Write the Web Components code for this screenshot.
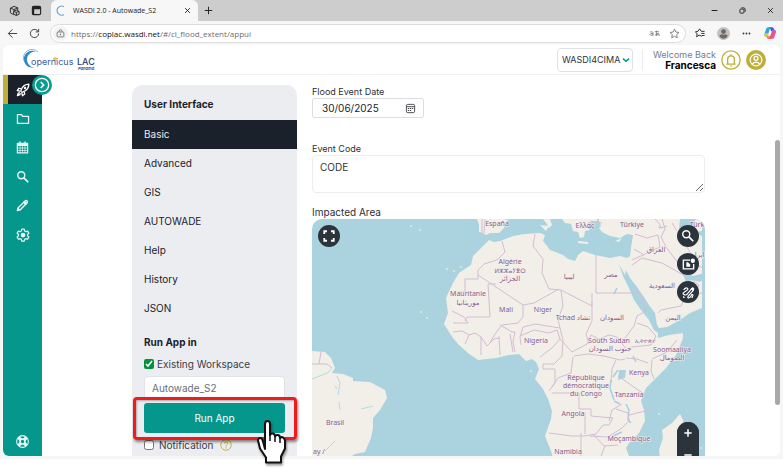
<!DOCTYPE html>
<html lang="en">
<head>
<meta charset="utf-8">
<title>WASDI 2.0 - Autowade_S2</title>
<style>
  html, body { height: 100%; }
  body { margin: 0; background: #fff; font-family: Inter, "Liberation Sans", sans-serif; color: #1b212b; overflow: hidden; }
</style>
</head>
<body>
<browser-window>
  <tab-strip slot="tabs"></tab-strip>
  <address-bar slot="toolbar"></address-bar>
  <app-header slot="page"></app-header>
  <app-body slot="page"></app-body>
</browser-window>
<click-hint></click-hint>

<script>
const ICONS = {
  spaces: ['0 0 24 24', '<g fill="none" stroke="currentColor" stroke-width="2" stroke-linejoin="round"><path d="M3 7l8-4 8 3v5M3 7v10l7 4M3 7l8 3 8-4M11 10v3"/><path d="M10 14l6-3 6 3v6l-6 3-6-3zM10 14l6 2 6-2M16 16v7"/></g>'],
  tabs: ['0 0 24 24', '<rect x="3" y="3" width="18" height="18" rx="3" fill="none" stroke="currentColor" stroke-width="2.4"/><path d="M3 3h18v6H3zM3 8h4v13H3z" fill="currentColor"/>'],
  x: ['0 0 24 24', '<path d="M4 4l16 16M20 4L4 20" fill="none" stroke="currentColor" stroke-width="3.200"/>'],
  plus: ['0 0 24 24', '<path d="M12 2v20M2 12h20" fill="none" stroke="currentColor" stroke-width="2.6"/>'],
  zoomin: ['0 0 24 24', '<path d="M12 1v22M1 12h22" fill="none" stroke="currentColor" stroke-width="4.600"/>'],
  zoomout: ['0 0 24 24', '<path d="M1 12h22" fill="none" stroke="currentColor" stroke-width="4.600"/>'],
  min: ['0 0 24 24', '<path d="M2 12h20" fill="none" stroke="currentColor" stroke-width="3.600"/>'],
  restore: ['0 0 24 24', '<g fill="none" stroke="currentColor" stroke-width="3.200"><rect x="3" y="7" width="14" height="14" rx="3"/><path d="M8 3h8a5 5 0 0 1 5 5v8"/></g>'],
  back: ['0 0 24 24', '<path d="M22 12H3M12 3l-9 9 9 9" fill="none" stroke="currentColor" stroke-width="2"/>'],
  reload: ['0 0 24 24', '<path d="M21 12a9 9 0 1 1-3-6.700L21 8M21 2v6.500h-6.500" fill="none" stroke="currentColor" stroke-width="2"/>'],
  lock: ['0 0 24 24', '<g fill="none" stroke="currentColor" stroke-width="2.2"><rect x="3" y="8" width="18" height="13" rx="2"/><path d="M8 8V6a4 4 0 0 1 8 0v2"/></g><circle cx="12" cy="14.500" r="2" fill="currentColor"/>'],
  star: ['0 0 24 24', '<path d="M12 2.500l3 6.300 6.800.9-5 4.700 1.300 6.900L12 18l-6.100 3.300 1.300-6.900-5-4.700 6.800-.9z" fill="none" stroke="currentColor" stroke-width="1.800" stroke-linejoin="round"/>'],
  favs: ['0 0 24 24', '<path d="M16 20l-6-3-6 4 1-7-4-5 6-1 4-6 4 6h8M15 13h8M16 18h7" fill="none" stroke="currentColor" stroke-width="2.400" stroke-linejoin="round"/>'],
  person: ['0 0 24 24', '<circle cx="12" cy="12" r="12" fill="#c4c0bd"/><circle cx="12" cy="8.500" r="4.500" fill="#6d6966"/><path d="M4.500 17q0-3 3-3h9q3 0 3 3-2.500 4.500-7.500 4.500T4.500 17z" fill="#6d6966"/>'],
  dots: ['0 0 24 24', '<g fill="currentColor"><circle cx="4" cy="12" r="2.400"/><circle cx="12" cy="12" r="2.400"/><circle cx="20" cy="12" r="2.400"/></g>'],
  copilot: ['0 0 24 24', '<path d="M9 2h7q2 0 3 4l1 3h-6l-1-3q-1-3-4-4z" fill="#2167d8"/><path d="M9 2Q6 2 5 6L3 12q-2 6 2 6h3l3-11q1-4 4-5z" fill="#29a8e6"/><path d="M4 12q-3 6 1 6h4l2-5z" fill="#f2c230"/><path d="M15 22q3 0 4-4l2-6q2-6-2-6h-3l-3 11q-1 4-4 5z" fill="#b35cf0"/><path d="M20 9q3-2 2 2l-2 6q-1 5-5 5H9q-2 0-3-4h5q1 0 2-2l1-4z" fill="#ee5480"/><path d="M6 18h6l-2 4H9q-2 0-3-4z" fill="#f58a3a"/><path d="M11 9h3l-2 6H9z" fill="#fff"/>'],
  chevron: ['0 0 24 24', '<path d="M3 8l9 8 9-8" fill="none" stroke="currentColor" stroke-width="4.500"/>'],
  bell: ['0 0 24 24', '<circle cx="12" cy="12" r="11" fill="none" stroke="currentColor" stroke-width="1.600"/><path d="M6.500 17h11M8 17v-6q0-4 4-4t4 4v6M12 7V5M11 19.300h2" fill="none" stroke="currentColor" stroke-width="1.600"/>'],
  account: ['0 0 24 24', '<circle cx="12" cy="12" r="12" fill="currentColor"/><g fill="none" stroke="#fff" stroke-width="1.500"><circle cx="12" cy="12" r="7"/><circle cx="12" cy="10" r="2.400"/><path d="M7.500 17q1.500-2.500 4.500-2.500t4.500 2.500"/></g>'],
  rocket: ['0 0 24 24', '<g fill="none" stroke="currentColor" stroke-width="2.200" stroke-linejoin="round"><path d="M8 14q2-7 6-9.500T22 2q0 4-2.500 8T10 16z"/><path d="M9 10L5 9l-3 4 5 1M14 15l1 4-4 3-1-5"/><path d="M6.500 16.500q-3-.5-4 5 5-1 5-4"/></g><circle cx="15.500" cy="8.500" r="2" fill="currentColor"/>'],
  folder: ['0 0 24 24', '<path d="M2.500 4.500h7l2 3h10v12h-19z" fill="none" stroke="currentColor" stroke-width="2.200" stroke-linejoin="round"/>'],
  calendar: ['0 0 24 24', '<path d="M2.500 4.500h19V22h-19z" fill="none" stroke="currentColor" stroke-width="2.200" stroke-linejoin="round"/><path d="M2 4h20v5H2zM6 1h2.500v4H6zM15.500 1H18v4h-2.500z" fill="currentColor"/><path d="M3 13h18M3 17.500h18M7.500 9v13M12 9v13M16.500 9v13" stroke="currentColor" stroke-width="1.300"/>'],
  search: ['0 0 24 24', '<circle cx="9" cy="9" r="6" fill="none" stroke="currentColor" stroke-width="2.500"/><path d="M13.500 13.500L21 21" stroke="currentColor" stroke-width="3"/>'],
  pencil: ['0 0 24 24', '<path d="M2.500 21.500L4 16 17 3.500q2-1.500 3.500 0t0 3.500L8 20z" fill="none" stroke="currentColor" stroke-width="2.600" stroke-linejoin="round"/><path d="M2 22l2-6 4 4zM12 6l6 6 3-4-5-5z" fill="currentColor"/>'],
  gear: ['0 0 24 24', '<path d="M9.800 2h4.400l.6 3.100 2.100 1.200 3-1 2.200 3.800-2.400 2v2.400l2.400 2-2.200 3.800-3-1-2.100 1.200-.6 3H9.800l-.6-3-2.100-1.200-3 1-2.200-3.800 2.400-2v-2.400l-2.400-2L4.100 5.300l3 1 2.100-1.200z" fill="none" stroke="currentColor" stroke-width="2.100" stroke-linejoin="round"/><circle cx="12" cy="12.200" r="4" fill="currentColor"/>'],
  support: ['0 0 24 24', '<circle cx="12" cy="12" r="10.800" fill="none" stroke="currentColor" stroke-width="2"/><circle cx="12" cy="12" r="4.500" fill="none" stroke="currentColor" stroke-width="3"/><path d="M4.500 4.500l4.500 4.500M19.500 4.500L15 9M4.500 19.500L9 15M19.500 19.500L15 15" stroke="currentColor" stroke-width="6"/><circle cx="12" cy="12" r="2.600" fill="#05978c"/>'],
  toggle: ['0 0 24 24', '<circle cx="12" cy="12" r="12" fill="#0a9b90"/><circle cx="12" cy="12" r="8" fill="none" stroke="#fff" stroke-width="1.600"/><path d="M10.500 8.500L14 12l-3.500 3.500" fill="none" stroke="#fff" stroke-width="1.800"/>'],
  date: ['0 0 24 24', '<rect x="3" y="3" width="18" height="18" rx="3" fill="none" stroke="currentColor" stroke-width="2"/><path d="M3 8h18" stroke="currentColor" stroke-width="2"/><g fill="currentColor"><path d="M6 11h3v2H6zM10.500 11h3v2h-3zM15 11h3v2h-3zM6 15.500h3v2H6zM10.500 15.500h3v2h-3z"/></g>'],
  help: ['0 0 24 24', '<circle cx="12" cy="12" r="10.500" fill="none" stroke="currentColor" stroke-width="1.800"/><path d="M8.500 9.500q0-3.500 3.500-3.500t3.500 3.200q0 1.800-2 2.900-1.500.9-1.500 2.700" fill="none" stroke="currentColor" stroke-width="2"/><circle cx="12" cy="17.700" r="1.400" fill="currentColor"/>'],
  full: ['0 0 24 24', '<path d="M2.500 8V2.500H8M16 2.500h5.500V8M21.500 16v5.500H16M8 21.500H2.500V16" fill="none" stroke="currentColor" stroke-width="3.600"/>'],
  area: ['0 0 24 24', '<path d="M15 4H2.500v16h19V11" fill="none" stroke="currentColor" stroke-width="2.600"/><path d="M8 8h3l4 4v4h-7z" fill="currentColor"/><circle cx="20" cy="5" r="4" fill="currentColor"/>'],
  draw: ['0 0 24 24', '<path d="M3 7q4-5 7-3t-4 6-2 6 7-3l7-8 3 3-8 9q-4 5-1 5t6-6q3-1 2 2l-2 4" fill="none" stroke="currentColor" stroke-width="2.200" stroke-linejoin="round"/><path d="M16 5l4-3 3 3-3 4zM2 18l4 3-4 1z" fill="currentColor"/>'],
  loading: ['0 0 24 24', '<path d="M17 3.500A10 10 0 1 0 17 21" fill="none" stroke="#6fa8d8" stroke-width="2.600"/>'],
  translate: ['0 0 30 24', '<g fill="none" stroke="currentColor" stroke-width="2"><path d="M3 8q7-3 8 2v8M11 12q-8-1-8 3t8 1M16 7h11M20 4v12M26 10q-2 8-7 8-3-1 0-4t7-1 1 6"/></g>']
};

const define = (name, css, html, setup) => {
  const template = document.createElement('template');
  template.innerHTML = `<style>:host,*,*::before,*::after{box-sizing:border-box}button{border:0;padding:0;background:none;color:inherit;font:inherit;display:grid;place-items:center}${css}</style>${html}`;
  customElements.define(name, class extends HTMLElement {
    constructor() {
      super();
      this.attachShadow({ mode: 'open' }).append(template.content.cloneNode(true));
    }
    connectedCallback() { if (setup) setup(this, this.shadowRoot); }
  });
};

define('ui-icon', ':host{display:block;width:var(--size,12px);height:var(--size,12px);flex:none}svg{display:block;width:100%;height:100%}',
  '<svg aria-hidden="true"></svg>', (el, root) => {
    const [box, shapes] = ICONS[el.getAttribute('name')];
    const svg = root.querySelector('svg');
    svg.setAttribute('viewBox', box);
    svg.innerHTML = shapes;
  });

define('browser-window', `
  :host{display:flex;flex-direction:column;height:100vh;background:#fff}
  .frame{flex:1;min-height:0;display:flex;flex-direction:column;margin-bottom:13px;padding:0 3px 3px;background:#f6f6f6}
  .chrome{margin:0 -3px}
  .page{flex:1;min-height:0;display:flex;flex-direction:column;overflow:hidden;background:#fff;border-radius:6px}`,
  '<div class="frame"><div class="chrome"><slot name="tabs"></slot><slot name="toolbar"></slot></div><main class="page"><slot name="page"></slot></main></div>');

define('tab-strip', `
  :host{display:flex;align-items:stretch;height:21px;background:#cdcdcd;font:7px "Open Sans",sans-serif;color:#222}
  .tools{display:flex;align-items:center;gap:11px;width:51px;padding-left:9px}
  .tab{display:flex;align-items:center;gap:6px;width:147px;padding:0 7px 0 5px;background:#f7f7f7;border-radius:6px 6px 0 0}
  .tab span{flex:1;white-space:nowrap}
  .new{margin-left:6px}
  .win{display:flex;align-items:center;gap:21px;margin-left:auto;padding-right:9px}`,
  `<div class="tools"><button aria-label="Workspaces"><ui-icon name="spaces" style="--size:11px"></ui-icon></button><button aria-label="Tab actions"><ui-icon name="tabs" style="--size:11px"></ui-icon></button></div>
   <div class="tab"><ui-icon name="loading" style="--size:11px"></ui-icon><span>WASDI 2.0 - Autowade_S2</span><button aria-label="Close tab"><ui-icon name="x" style="--size:7px"></ui-icon></button></div>
   <button class="new" aria-label="New tab"><ui-icon name="plus" style="--size:9px"></ui-icon></button>
   <div class="win"><button aria-label="Minimize"><ui-icon name="min" style="--size:7px"></ui-icon></button><button aria-label="Restore"><ui-icon name="restore" style="--size:7px"></ui-icon></button><button aria-label="Close"><ui-icon name="x" style="--size:7px"></ui-icon></button></div>`);

define('address-bar', `
  :host{display:flex;align-items:center;gap:11px;height:24px;padding:0 6px 0 7px;background:#f7f7f7;color:#333;font:8px "Open Sans",sans-serif}
  .box{flex:1;display:flex;align-items:center;gap:9px;height:19px;margin-left:-1px;padding:0 5px 0 2px;background:#fff;border:1px solid #dcdcdc;border-radius:10px;color:#6a6a6a}
  .site{width:15px;height:15px;border-radius:50%;background:#f3f3f3}
  a{flex:1;margin-left:-6px;color:#6c6c6c;text-decoration:none;white-space:nowrap}
  b{font-weight:400;color:#111}
  .right{display:flex;align-items:center;gap:12px;margin-left:-2px}`,
  `<button aria-label="Back"><ui-icon name="back" style="--size:11px"></ui-icon></button>
   <button aria-label="Reload"><ui-icon name="reload" style="--size:11px"></ui-icon></button>
   <div class="box"><button class="site" aria-label="Site information"><ui-icon name="lock" style="--size:9px"></ui-icon></button><a href="#/cl_flood_extent/appui">https://<b>coplac.wasdi.net</b>/#/cl_flood_extent/appui</a><button aria-label="Translate"><ui-icon name="translate" style="--size:11px"></ui-icon></button><button aria-label="Favorite"><ui-icon name="star" style="--size:11px"></ui-icon></button></div>
   <div class="right"><button aria-label="Favorites"><ui-icon name="favs" style="--size:10px"></ui-icon></button><button aria-label="Profile"><ui-icon name="person" style="--size:13px"></ui-icon></button><button aria-label="Settings"><ui-icon name="dots" style="--size:9px"></ui-icon></button><button aria-label="Copilot"><ui-icon name="copilot" style="--size:14px"></ui-icon></button></div>`);

define('brand-logo', `
  :host{display:block}
  svg{display:block;width:74px;height:22px}
  text{font-family:Inter,sans-serif}`,
  `<svg viewBox="0 0 74 22" role="img" aria-label="Copernicus LAC Panamá"><path d="M13 2.500A8.500 8.500 0 1 0 11 18.500 8 8 0 0 1 13 2.500z" fill="#2f86c4"/><path d="M15 3A8.500 8.500 0 0 0 1 12" fill="none" stroke="#7db9e0"/>
   <circle cx="32" cy="10" r="2" fill="#f0cc30"/><text x="8" y="16" font-size="9" fill="#3d5ca0">opernicus</text><text x="54" y="16" font-size="9" font-weight="500" fill="#263c72">LAC</text>
   <text x="55" y="21" font-size="4" font-weight="700" font-style="italic" fill="#2d55a5">Panamá</text></svg>`);

define('app-header', `
  :host{display:flex;align-items:center;flex:none;height:30px;padding:0 14px 0 20px;border-bottom:1px solid #f0f0f0}
  .pick{position:relative;margin-left:auto;color:#05978c}
  select{appearance:none;display:block;height:24px;width:76px;padding:0 4px;border:1px solid #dfe0e8;border-radius:4px;background:#fff;font:9px Inter,sans-serif;color:#2c3340}
  .pick ui-icon{position:absolute;right:3px;top:8px;pointer-events:none}
  .user{margin-left:9px;padding-left:10px;border-left:1px solid #ececec;text-align:right;font-size:9px;line-height:11px;color:#757d90}
  .user b{display:block;font-size:10px;color:#000}
  .icons{display:flex;gap:5px;margin-left:5px;color:#bfae38}`,
  `<brand-logo></brand-logo>
   <div class="pick"><select aria-label="Organization"><option>WASDI4CIMA</option></select><ui-icon name="chevron" style="--size:8px"></ui-icon></div>
   <div class="user">Welcome Back<b>Francesca</b></div>
   <div class="icons"><button aria-label="Notifications"><ui-icon name="bell" style="--size:20px"></ui-icon></button><button aria-label="Account"><ui-icon name="account" style="--size:20px"></ui-icon></button></div>`);

define('app-body', `
  :host{flex:1;min-height:0;display:flex}
  .work{flex:1;min-width:0;display:grid;grid-template-columns:165px minmax(0,1fr);gap:15px;padding:10px 70px 0 90px}
  .bar{width:5px;padding-top:65px}
  .bar div{height:265px;border-radius:3px;background:#a9a9a9}`,
  `<side-nav></side-nav><div class="work"><app-menu></app-menu><event-form></event-form></div><div class="bar"><div></div></div>`);

define('side-nav', `
  :host{position:relative;display:flex;flex-direction:column;width:39px;background:#05978c;color:#e8f7f5}
  nav{display:flex;flex-direction:column;flex:1}
  a{display:grid;place-items:center;height:29px;color:inherit}
  a.on{background:#1b212b;color:#fff;border-left:5px solid #bfae38;padding-right:5px}
  a.last{margin-top:auto}
  .open{position:absolute;right:-10px;top:0}`,
  `<nav aria-label="Main">
    <a class="on" href="#apps" aria-label="Apps"><ui-icon name="rocket" style="--size:14px"></ui-icon></a>
    <a href="#workspaces" aria-label="Workspaces"><ui-icon name="folder" style="--size:14px"></ui-icon></a>
    <a href="#plan" aria-label="Plan"><ui-icon name="calendar" style="--size:13px"></ui-icon></a>
    <a href="#search" aria-label="Search"><ui-icon name="search" style="--size:14px"></ui-icon></a>
    <a href="#edit" aria-label="Edit"><ui-icon name="pencil" style="--size:13px"></ui-icon></a>
    <a href="#settings" aria-label="Settings"><ui-icon name="gear" style="--size:14px"></ui-icon></a>
    <a class="last" href="#support" aria-label="Support"><ui-icon name="support" style="--size:13px"></ui-icon></a>
   </nav><button class="open" aria-label="Expand menu"><ui-icon name="toggle" style="--size:20px"></ui-icon></button>`);

define('app-menu', `
  :host{display:block;background:#ecedf0;border-radius:10px 10px 0 0;font-size:10px;color:#1b212b}
  h2{margin:0;font-size:10px;font-weight:700}
  h2.top{height:35px;padding:4px 12px 0;line-height:31px}
  a{display:block;height:29px;padding:0 12px;line-height:29px;color:inherit;text-decoration:none}
  a.on{background:#1b212b;color:#e9eaec}
  form{display:flex;flex-direction:column;padding:12px 12px 0}
  h2.run{line-height:14px;margin-bottom:8px}
  label{display:flex;align-items:center;gap:2px;height:14px;color:#3a404a}
  label span{padding-left:1px}
  input[type=checkbox]{width:10px;height:10px;margin:0;accent-color:#07903c}
  input[type=text]{width:100%;height:24px;margin-top:5px;padding:0 7px;border:1px solid #e2e3e6;border-radius:4px;background:#fff;font:10px Inter,sans-serif;color:#6a6f78}
  .go{height:30px;margin:3px 0 5px;border-radius:3px;background:#05978c;color:#fff}
  label.note{gap:4px}
  label ui-icon{margin-left:3px;color:#bfae38}`,
  `<h2 class="top">User Interface</h2>
   <nav aria-label="Sections"><a class="on" href="#basic">Basic</a><a href="#advanced">Advanced</a><a href="#gis">GIS</a><a href="#autowade">AUTOWADE</a><a href="#help">Help</a><a href="#history">History</a><a href="#json">JSON</a></nav>
   <form><h2 class="run">Run App in</h2>
   <label><input type="checkbox" checked><span>Existing Workspace</span></label>
   <input type="text" aria-label="Workspace" value="Autowade_S2">
   <button class="go" type="button">Run App</button>
   <label class="note"><input type="checkbox"><span>Notification</span><ui-icon name="help" style="--size:12px"></ui-icon></label></form>`);

define('event-form', `
  :host{display:flex;flex-direction:column;min-width:0;color:#2c3038}
  label{font-size:9px;line-height:13px}
  .date{position:relative;align-self:flex-start;margin-bottom:24px}
  input{display:block;width:112px;height:20px;padding:0 9px;border:1px solid #dcdde4;border-radius:3px;font:10px Inter,sans-serif;color:#20242c}
  .date button{position:absolute;right:8px;top:5px;color:#444}
  textarea{display:block;width:100%;height:38px;margin-bottom:12px;padding:5px 7px;border:1px solid #ececf0;border-radius:4px;font:10px/13px Inter,sans-serif;color:#333;resize:vertical}
  .area{font-size:10px;line-height:14px}
  area-map{flex:1;min-height:237px}`,
  `<label for="d">Flood Event Date</label><div class="date"><input id="d" type="text" value="30/06/2025"><button type="button" aria-label="Choose date"><ui-icon name="date" style="--size:11px"></ui-icon></button></div>
   <label for="c">Event Code</label><textarea id="c">CODE</textarea>
   <div class="area">Impacted Area</div><area-map></area-map>`);

define('area-map', `
  :host{display:block;position:relative;overflow:hidden;border-radius:10px 10px 0 0;background:#aad3df}
  svg{position:absolute;inset:0;width:100%;height:100%}
  text{font-family:"Noto Sans","DejaVu Sans",sans-serif;font-size:7px;fill:#85598d;text-anchor:middle;paint-order:stroke;stroke:#f6f3ef;stroke-width:1px}
  .small{font-size:6px}
  button{width:22px;height:22px;border-radius:50%;background:#2b343b;color:#fff}
  .full{position:absolute;left:6px;top:6px}
  .tools{position:absolute;right:6px;top:6px;display:grid;gap:6px}
  .zoom{position:absolute;right:6px;top:203px;border-radius:11px;background:#2b343b}`,
  `<svg viewBox="0 0 393 237" preserveAspectRatio="xMinYMin slice" role="img" aria-label="Map of Africa and the Atlantic">
   <g fill="#f2efe9">
    <path d="M177 21l5 2 6-1 13-5 12-2 15-1 5 2-2 6 4 5 3 4 13 5 5 4 7 2 3-6 5-4 12 4 15 3 10-2 7 2 3-2 1-8 2-13-6-1-7 4-5-1-5-1-8-4-3-4 2-2-2-5V0h103v89l-12 5-10 7-13 7-8 1-2-3-2-12-6-8-5-8-7-10-7-9-4-8-1 5-6-11 4 12 6 12 5 12 7 10 8 10 5 10 4 3v5l11-3 14-2v5l-1 3-6 14-10 13-12 12-8 8-3 7-2 6 3 9 1 11-6 12-10 10-3 5 3 8v5h-75l-3-10-6-15 6-17 1-8-4-12-5-10-8-10 4-10-3-7-4-3-6 2-7-7-10 1-13 3-18 2-10-7-9-8-6-7-2-3-7-11 4-11-2-15 7-15 6-10 12-8 2-9 10-10z"/>
    <path d="M165 0l2 6v7l4 1 3 2 4-2h9l5-5 1-5 4-4z"/>
    <path d="M231 0l4 5 2 4 3-3-2-6zM250 0l3 4 6 1 2 7 5 1 2 6 4-1 1-6 5-1-4-4 2-3 9-2V0z"/><path d="M266 22l10 1v2l-10-1zM303 22l7-3-3 4zM228 6l9 1-3 5z"/>
    <path d="M0 132l13 1 6 6 4 10-3 5 11 1 10 4v3l17 1 15 8 2 8-7 12-7 8v10l-2 10-6 14-10 2-5 3H0z"/>
    <path d="M368 195l3 6 1 7-3 10-4 20h-17l-1-7 4-12-1-8 10-7z"/>
   </g>
   <g fill="#aad3df">
    <path d="M368 0h16l-4 6 5 8-3 8-9 0-6-12zM383 14l9-3v7zM365 45l7 13 2 5 6-2 8 2 5-4v-5l-12 3-6-4-6-10zM307 151l7 0-1 8-7 2zM346 8l3-1-1 3z"/>
   </g>
   <path d="M299 161l-1 8 4 12M302 182l6 3M314 185l3 6-1 10 3 3M310 213l-9 4M321 137l3 6M306 151l-5 7M305 69l-3 6" fill="none" stroke="#a6cfe4" stroke-width="1.500"/>
   <path d="M25 157l3 7-2 12M0 160l15-6 5-4M23 167l2 3M61 187l-12 3M13 232l10-10M27 183l1 8" fill="none" stroke="#b5d9e4"/>
   <g fill="none" stroke="#d3bdd2" stroke-width="1">
    <path d="M190 22l3 11-8 8-13 4-6 6v9h-13v13h-6M166 56l45 30 11-2 25-14M176 65l2 33h-23l-2 4M176 65l8 0M211 86v12l-5 6-16 2-7 9-5 9M223 15l-2 12 10 13-1 14 7 16M237 70l12 1 31 16V74M284 36v38h43M280 83v19l-6 13 3 10M249 71l2 16-5 13 2 9M248 109l-25-4-12 3-3 10 1 8M140 92l12 6 4 6h-15M141 113l9-1 7 4-4 9M157 116l6-2 6 4 6 9 7-7 5-1M169 118v18M187 117l1 19M198 115l3 18M203 113l-2 10 2 10M188 106l12 7 3 0M208 117l14-6 15 3 8-3 3 9-8 9-12 9"/>
    <path d="M248 120l12 13 15-8 4-9 8 4 10-4 8 2 9 12M248 109l3 12-1 16-8 8-11 0v5h12v14l-6 8M261 138l-2 16-13 5-6 9M262 137l14-2 16 2 16 4 5-1M304 141l-4 9-1 14M314 139l11 1 11 4M340 141l-1 11 3 8M306 157l26 18M240 174h27v16h12v7l22 2-4 7h-6l-7 9-12 2h-12l-23-3M269 214v24M273 193v22M281 215l11 12 14-1M297 202l3-11 10-6M317 196l20-5M293 227l-4 10M278 217l18 1 14-9 8-8M304 190l12 4 1 7M327 74l7 18-9 5-3 10-9 12M325 104l11 4 8 9-5 9-20 2M340 140l15-7 10-12"/>
    <path d="M320 46l10-7 20 5 25 14M323 15l12 4 11-3 2 12-17 8-11 5M322 30l10 6M350 0l3 10-4 8 5 10 15 20 4 4M346 94l3-3 20-4 4-8 20-6M360 4l5 8M375 28l10 18 8 4M379 60l8 6-6 13M173 0l-1 14M170 16V0M290 4l-12-2M0 145h15l5 4M9 133l-2 12M193 0l8 0M343 0q6 5 6 9l6-2"/>
   </g>
   <g fill="#dcebe0"><circle cx="135" cy="50" r="1"/><circle cx="142" cy="52" r="1"/><circle cx="149" cy="48" r="1"/><circle cx="109" cy="93" r="1"/><circle cx="115" cy="99" r="1"/><circle cx="99" cy="7" r="1"/><circle cx="108" cy="11" r="1"/><circle cx="219" cy="152" r="1"/><circle cx="347" cy="195" r="1"/><circle cx="389" cy="229" r="1"/></g>
   <g><text x="185" y="7">España</text><text x="273" y="9">Ελλάς</text><text x="320" y="8">Türkiye</text><text x="385" y="8">Türk</text>
    <text x="198" y="45">Algérie</text><text x="198" y="54" class="small">ⵍⵣⵣⴰⵢⴻⵔ</text><text x="198" y="62">الجزائر</text>
    <text x="257" y="60">ليبيا</text><text x="299" y="58">مصر</text><text x="344" y="33">العراق</text><text x="385" y="38">ایران</text><text x="350" y="69">السعودية</text><text x="361" y="101">اليمن</text>
    <text x="156" y="77">Mauritanie</text><text x="156" y="86">موريتانيا</text><text x="194" y="93">Mali</text><text x="231" y="93">Niger</text><text x="261" y="101">Tchad تشاد</text><text x="300" y="101">السودان</text>
    <text x="224" y="124">Nigeria</text><text x="297" y="124">South Sudan</text><text x="298" y="132">جنوب السودان</text><text x="333" y="124" class="small">ኢትዮጵያ</text><text x="360" y="133">Soomaaliya</text><text x="360" y="141">الصومال</text>
    <text x="327" y="156">Kenya</text><text x="274" y="161">République</text><text x="274" y="169">démocratique</text><text x="274" y="177">du Congo</text><text x="317" y="178">Tanzania</text><text x="261" y="197">Angola</text><text x="317" y="222">Moçambique</text><text x="256" y="235">Namibia</text><text x="23" y="206">Brasil</text><text x="7" y="235">ay /</text></g>
   </svg>
   <button class="full" aria-label="Full screen"><ui-icon name="full" style="--size:12px"></ui-icon></button>
   <div class="tools"><button aria-label="Search place"><ui-icon name="search" style="--size:14px"></ui-icon></button><button aria-label="Select area"><ui-icon name="area" style="--size:13px"></ui-icon></button><button aria-label="Draw"><ui-icon name="draw" style="--size:13px"></ui-icon></button></div>
   <div class="zoom"><button aria-label="Zoom in"><ui-icon name="zoomin" style="--size:8px"></ui-icon></button><button aria-label="Zoom out"><ui-icon name="zoomout" style="--size:8px"></ui-icon></button></div>`);

define('click-hint', `
  :host{position:absolute;left:133px;top:397px;width:164px;height:43px;border:3px solid #ee1c1c;border-radius:4px;box-shadow:1px 2px 3px #0007,inset 1px 1px 2px #0004;pointer-events:none}
  svg{position:absolute;left:118px;top:19px;width:34px;height:48px;filter:drop-shadow(1px 2px 1px #0006)}`,
  `<svg viewBox="0 0 34 48" aria-hidden="true"><path d="M11 30V5q0-3 2.500-3T16 5v11q1-2 3-1.500t2 3q1-2 3-1.500t2 3q1.500-1.500 3-.5t2 3v8l-4 8v6H12v-5l-6-9-2-8q0-2 2-2.500t3 3.500z" fill="#fff" stroke="#111" stroke-width="2" stroke-linejoin="round"/><path d="M16 16v6M21 18v5M26 19v5" stroke="#111" stroke-width="1.500"/></svg>`);
</script>
</body>
</html>
